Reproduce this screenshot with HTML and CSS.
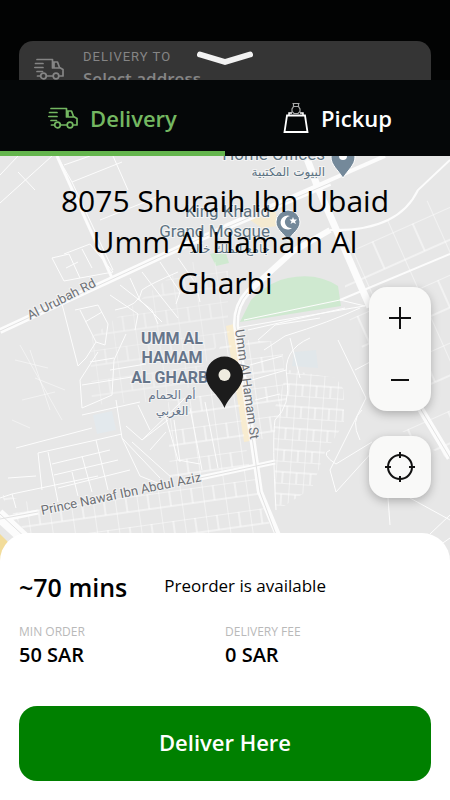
FILE: index.html
```html
<!DOCTYPE html>
<html lang="en">
<head>
  <meta charset="UTF-8">
  <meta name="viewport" content="width=device-width, initial-scale=1.0">
  <title>Delivery address</title>
  <link rel="stylesheet" href="styles.css">
</head>
<body>

  <!-- van is used in the header card and in the tab -->
  <svg class="sprite" aria-hidden="true">
    <symbol id="van" viewBox="0 0 30 22">
      <g fill="none" stroke="currentColor" stroke-width="1.700" stroke-linejoin="round" stroke-linecap="round">
        <path d="M3 1.500H18.500V10M18.500 4H23.500L25.500 9.500L29 11.500V18H25.500M18.500 18H12.500M6 18H3.500M20 4V10H25.500"/>
        <path d="M1.500 5.500H9M.8 9.500H9M3 13.500H8.500"/>
        <circle cx="9.500" cy="18" r="2.800"/>
        <circle cx="22" cy="18" r="2.800"/>
      </g>
    </symbol>
  </svg>

  <header class="backdrop">
    <div class="address-card">
      <svg class="card-icon"><use href="#van"/></svg>
      <div>
        <div class="card-label">DELIVERY TO</div>
        <div class="card-value">Select address</div>
      </div>
    </div>
    <button class="close-btn" aria-label="Close">
      <svg width="58" height="16" viewBox="0 0 58 16">
        <path d="M4 4.500L29 12L54 4.500" fill="none" stroke="#f2f2f2" stroke-width="6" stroke-linecap="round" stroke-linejoin="round"/>
      </svg>
    </button>
  </header>

  <nav class="tabs">
    <button class="tab active">
      <svg class="tab-icon"><use href="#van"/></svg>
      <span>Delivery</span>
    </button>
    <button class="tab">
      <svg class="bag-icon" viewBox="0 0 26 32" fill="none" stroke="currentColor">
        <path d="M4 13.500H22L24.500 30H1.500Z" stroke-width="1.800"/>
        <path d="M6 13V11H9M20 13V11H17" stroke-width="1.500"/>
        <path d="M9.500 1.500H16.500M10.500 2V4.500L9 7V9.500L11 11.500H15L17 9.500V7L15.500 4.500V2M10.500 4.500H15.500" stroke-width="1.200" opacity=".65"/>
      </svg>
      <span>Pickup</span>
    </button>
  </nav>

  <main class="map">
    <svg class="map-canvas" viewBox="0 156 450 406" preserveAspectRatio="xMidYMin slice">
      <defs>
        <!-- city blocks -->
        <pattern id="blocks" width="22" height="30" patternUnits="userSpaceOnUse" patternTransform="rotate(-8)">
          <path d="M0 0H22M0 15H22M0 0V30M11 0V15" class="lane"/>
        </pattern>
        <pattern id="dense" width="14" height="22" patternUnits="userSpaceOnUse" patternTransform="rotate(4)">
          <path d="M0 0H14M0 11H14M0 0V22M7 11V22" class="lane"/>
        </pattern>
        <pattern id="slanted" width="44" height="62" patternUnits="userSpaceOnUse" patternTransform="rotate(-24)">
          <path d="M0 0H44M0 30H44M0 0V62M22 0V30" class="lane"/>
        </pattern>
      </defs>
      <rect y="156" width="450" height="406" fill="#e7e7e7"/>

      <!-- parks and pale plots -->
      <path d="M240 322L251 300Q270 281 288 278Q317 272 338 286L341 306Z" fill="#cfe9d0"/>
      <path d="M210 254L225 250L229 263L216 266Z" fill="#cfe9d0"/>
      <path d="M93 415L112 411L116 430L97 434Z" fill="#e3e9ed"/>
      <path d="M294 352L316 350L318 368L292 366Z" fill="#e1e7ea"/>
      <path d="M250 220L275 208L278 226L262 228Z" fill="#f4ead0"/>
      <path d="M226 326L234 324L256 440L244 442Z" fill="#f8ecd0"/>
      <path d="M0 534L28 562H0Z" fill="#f2dc9a"/>

      <!-- small streets -->
      <path d="M168 402L205 392L228 322L244 435L250 470L205 476L170 484Z" fill="url(#blocks)"/>
      <path d="M90 338L190 262L228 262L228 330L180 400L92 405Z" fill="url(#blocks)" opacity=".6"/>
      <path d="M0 494L50 508L205 478L255 468L272 534V562H45Z" fill="url(#blocks)"/>
      <path d="M246 340L282 342L286 400L272 440L252 438Z" fill="url(#blocks)"/>
      <path d="M288 370L336 378L344 390V424L325 452L312 488L275 512L274 410Z" fill="url(#dense)"/>
      <path d="M345 240L450 190V460L400 430L345 310Z" fill="url(#slanted)"/>
      <g class="lane">
        <path d="M0 175L18 156M0 203L52 156M18 172L35 190M57 156L72 182L113 270M72 182L122 162M64 165L90 156M113 156L128 190M100 220L160 196M52 258L64 281L80 278L69 254ZM64 254L90 244L113 272L80 278M82 249L92 268M66 268L78 262"/>
        <path d="M62 304L78 366L86 358L96 342L80 310M75 310L98 305L108 324L105 345L96 342M85 322L102 312M120 285L152 310L158 324M130 278L140 300L162 322M142 272L162 298L178 318M160 262L180 292L176 304M178 258L196 284L200 302M110 295L138 314L135 330M115 310Q140 306 142 290Q150 284 178 272M98 352L80 380L82 408L96 402L112 395L114 360L126 334M90 362L114 358M82 385L138 376M110 370L146 364M82 415L140 402M116 400L122 438L160 478M126 426L142 440L185 398M132 442L172 478M142 440L168 420M150 450L166 432M138 405L150 430M165 415L178 460L200 464M174 420L180 462M190 408L202 470M205 402L218 468"/>
        <path d="M38 453L96 440L122 434M38 453L42 490M48 452L58 502M52 464L110 450M54 475L118 460M58 488L130 470M96 440L108 490M72 472L78 496M82 456L92 492M122 438L140 476L160 484M0 498L12 494L98 476M12 494L16 508M16 448L92 428M8 478L36 476"/>
        <path d="M244 320L340 300L365 306M248 330L345 308M236 328L370 305M258 340L275 325L320 318M264 350L285 336Q330 322 360 308M290 338L300 378M250 365L282 356M252 380L286 370M255 400L280 394M287 378Q282 350 310 338M287 378Q291 405 275 420Q272 440 276 510M338 340L366 398L330 470L336 492L374 450M355 370L370 362M362 410Q350 420 360 440M330 450Q320 454 336 464L372 442"/>
        <path d="M20 345L62 420M15 360L48 368M30 350L50 410M22 400L55 392M12 420L30 428M35 378L65 390" opacity=".5"/>
        <path d="M388 498L390 525M410 498L450 520M430 534L450 515M440 545L450 538"/>
      </g>

      <!-- larger streets -->
      <g class="street">
        <path d="M57 156L112 278" stroke-width="3"/>
        <path d="M225 226L385 156" stroke-width="4"/>
        <path d="M330 230Q398 232 418 190L450 160M340 300L450 254" stroke-width="2"/>
        <path d="M306 156L318 188L370 307" stroke-width="7"/>
        <path d="M0 331L190 243L330 183" stroke-width="6"/>
        <path d="M330 230L292 252L248 292Q235 306 236 326L260 492L280 540" stroke-width="6"/>
        <path d="M0 520L38 512M200 478L275 462" stroke-width="5"/>
        <path d="M0 512L30 540M0 520L24 542M420 408L450 458" stroke-width="7"/>
      </g>
      <g class="divider">
        <path d="M0 331L190 243L330 183M248 292Q235 306 236 326L260 492L278 540M0 519L38 512M200 478L275 462M0 514L28 540M420 408L450 458"/>
      </g>

      <!-- place pins -->
      <g fill="#74899a" stroke="#fff" stroke-width="1">
        <path d="M343 178C338 170 331 165 331 157A12 12 0 0 1 355 157C355 165 348 170 343 178Z"/>
        <path d="M288 241C284 233 276 230 276 222A12 12 0 0 1 300 222C300 230 292 233 288 241Z"/>
      </g>
      <circle cx="343" cy="156" r="4" fill="#fff"/>
      <path d="M292 228A7 7 0 1 1 290 216A5.500 5.500 0 1 0 292 228Z" fill="#fff"/>
      <path d="M293 217L294 219.500L297 219.500L295 221.500L296 224L293 222.500L290.500 224L291.500 221.500L289.500 219.500L292 219.500Z" fill="#fff"/>

      <g class="place">
        <text x="325" y="160" text-anchor="end">Home Offices</text>
        <text x="325" y="176" text-anchor="end" class="arabic">البيوت المكتبية</text>
        <text x="270" y="217" text-anchor="end">King Khalid</text>
        <text x="270" y="237" text-anchor="end">Grand Mosque</text>
        <text x="270" y="253" text-anchor="end" class="arabic">جامع الملك خالد</text>
      </g>
      <g class="district" text-anchor="middle">
        <text x="172" y="344">UMM AL</text>
        <text x="172" y="363">HAMAM</text>
        <text x="172" y="383">AL GHARBI</text>
        <text x="172" y="399" class="arabic">أم الحمام</text>
        <text x="172" y="415" class="arabic">الغربي</text>
      </g>
      <g class="road">
        <text transform="translate(30 320) rotate(-27)">Al Urubah Rd</text>
        <text transform="translate(42 515) rotate(-12)">Prince Nawaf Ibn Abdul Aziz</text>
        <text transform="translate(235 330) rotate(82)">Umm Al Hamam St</text>
      </g>

      <!-- selected point -->
      <path d="M224.500 408C219 394 206 389 206 375A18.500 18.500 0 0 1 243 375C243 389 230 394 224.500 408Z" fill="#1c1c1c"/>
      <circle cx="224.500" cy="375" r="6" fill="#eeebe0"/>
    </svg>

    <h1 class="address">8075 Shuraih Ibn Ubaid Umm Al Hamam Al Gharbi</h1>

    <div class="controls">
      <div class="zoom">
        <button class="control-btn" aria-label="Zoom in">
          <svg width="24" height="24" viewBox="0 0 24 24"><path d="M1 12H23M12 1V23" stroke="#111" stroke-width="2"/></svg>
        </button>
        <button class="control-btn" aria-label="Zoom out">
          <svg width="24" height="24" viewBox="0 0 24 24"><path d="M3 12H21" stroke="#111" stroke-width="2"/></svg>
        </button>
      </div>
      <button class="control-btn locate" aria-label="My location">
        <svg width="30" height="30" viewBox="0 0 30 30" fill="none" stroke="#111" stroke-width="2">
          <circle cx="15" cy="15" r="12"/>
          <path d="M15 0V6M15 24V30M0 15H6M24 15H30"/>
        </svg>
      </button>
    </div>
  </main>

  <section class="panel">
    <div class="time-row">
      <span class="time">~70 mins</span>
      <span class="preorder">Preorder is available</span>
    </div>
    <dl class="fees">
      <div>
        <dt>MIN ORDER</dt>
        <dd>50 SAR</dd>
      </div>
      <div>
        <dt>DELIVERY FEE</dt>
        <dd>0 SAR</dd>
      </div>
    </dl>
    <button class="deliver-btn">Deliver Here</button>
  </section>

</body>
</html>
```
FILE: styles.css
```css
* {
  margin: 0;
  padding: 0;
  box-sizing: border-box;
}

body {
  display: flex;
  flex-direction: column;
  min-height: 100vh;
  background-color: #020303;
  color: #000;
  font-family: 'Open Sans', sans-serif;
}

button {
  border: none;
  background: none;
  font-family: inherit;
  cursor: pointer;
}

.sprite {
  position: absolute;
  width: 0;
  height: 0;
}

/* dimmed screen behind the sheet */
.backdrop {
  position: relative;
  height: 80px;
  padding: 41px 19px 0;
  overflow: hidden;
}

.address-card {
  display: flex;
  gap: 19px;
  height: 60px;
  padding: 8px 15px;
  border-radius: 14px;
  background-color: #353535;
  color: #858585;
}

.card-icon {
  flex: none;
  width: 30px;
  height: 22px;
  margin-top: 9px;
}

.card-label {
  font-family: Roboto, sans-serif;
  font-size: 13px;
  line-height: 16px;
  letter-spacing: 1px;
}

.card-value {
  font-size: 17px;
  font-weight: 600;
  line-height: 28px;
}

.close-btn {
  position: absolute;
  top: 50px;
  left: 50%;
  height: 16px;
  transform: translateX(-50%);
}

.close-btn svg {
  display: block;
}

.tabs {
  display: flex;
  height: 76px;
  background-color: #050708;
}

.tab {
  display: flex;
  flex: 1;
  align-items: center;
  justify-content: center;
  gap: 12px;
  padding-top: 4px;
  border-bottom: 5px solid transparent;
  color: #fff;
  font-size: 22px;
  font-weight: 600;
}

.tab.active {
  border-bottom-color: #64b54d;
  color: #74b761;
}

.tab-icon {
  width: 30px;
  height: 22px;
}

.bag-icon {
  width: 26px;
  height: 32px;
}

/* map */
.map {
  position: relative;
  flex: 1;
  min-height: 340px;
  padding-top: 24px;
  overflow: hidden;
}

.map-canvas {
  position: absolute;
  top: 0;
  left: 0;
  width: 100%;
  height: 100%;
}

.lane {
  fill: none;
  stroke: #fdfdfd;
  stroke-width: 1;
}

.street {
  fill: none;
  stroke: #fcfcfc;
}

.divider {
  fill: none;
  stroke: #e2e2e2;
  stroke-width: 1;
}

.place,
.district,
.road {
  font-family: Roboto, 'DejaVu Sans', sans-serif;
  paint-order: stroke;
  stroke: #f3f3f3;
  stroke-width: 2px;
}

.place {
  fill: #5c7282;
  font-size: 17px;
}

.district {
  fill: #66758a;
  font-size: 16px;
  font-weight: 700;
}

.road {
  fill: #6d7075;
  font-size: 13px;
}

.arabic {
  font-family: 'DejaVu Sans', sans-serif;
  font-size: 12px;
  font-weight: 400;
}

.address {
  position: relative;
  padding: 0 55px;
  font-size: 30px;
  font-weight: 400;
  line-height: 41px;
  text-align: center;
}

/* floats over the map */
.controls {
  position: absolute;
  right: 19px;
  bottom: 63px;
  display: flex;
  flex-direction: column;
  gap: 25px;
  width: 62px;
}

.zoom,
.locate {
  border-radius: 18px;
  background-color: #f9f9f8;
  box-shadow: 0 3px 10px rgba(0, 0, 0, 0.25);
}

.control-btn {
  display: flex;
  align-items: center;
  justify-content: center;
  width: 100%;
  height: 62px;
}

/* bottom panel */
.panel {
  position: relative;
  margin-top: -28px;
  padding: 36px 19px 19px;
  border-radius: 28px 28px 0 0;
  background-color: #fff;
}

.time-row {
  display: flex;
  gap: 37px;
  line-height: 36px;
}

.time {
  font-size: 25px;
  font-weight: 600;
}

.preorder {
  font-size: 17px;
  line-height: 34px;
}

.fees {
  display: grid;
  grid-template-columns: 1fr 1fr;
  margin: 18px 0 37px;
}

.fees dt {
  color: #b9b9b9;
  font-size: 12px;
  line-height: 18px;
}

.fees dd {
  font-size: 20px;
  font-weight: 600;
  line-height: 28px;
}

.deliver-btn {
  display: block;
  width: 100%;
  height: 75px;
  padding-bottom: 4px;
  border-radius: 18px;
  background-color: #008000;
  color: #fff;
  font-size: 22px;
  font-weight: 600;
}
```
